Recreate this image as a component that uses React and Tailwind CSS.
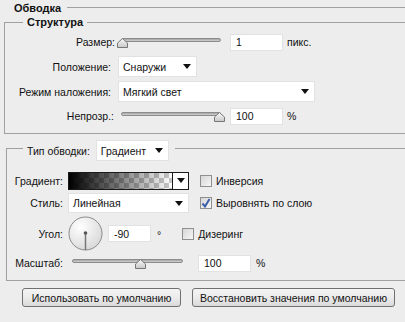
import React from 'react';

const Arrow = () => (
  <svg width="8" height="5" viewBox="0 0 8 5" className="shrink-0">
    <polygon points="0,0 8,0 4,5" fill="#111" />
  </svg>
);

const Select = ({ value, className = '' }) => (
  <div className={`flex items-center justify-between bg-white border border-[#e2e2e2] pl-[4px] pr-[5px] ${className}`}>
    <span>{value}</span>
    <Arrow />
  </div>
);

const Input = ({ value, className = '' }) => (
  <div className={`flex items-center bg-white border border-[#e2e2e2] pl-[5px] h-[17px] ${className}`}>{value}</div>
);

const Slider = ({ width, pct, className = '' }) => (
  <div className={`relative h-[14px] shrink-0 ${className}`}>
    <div className="mx-[4px] mt-[3px] h-[4px] rounded-full border border-[#8c8c8c] bg-linear-to-b from-[#a4a4a4] to-[#d2d2d2]" />
    <svg
      width="11"
      height="10"
      viewBox="0 0 11 10"
      className="absolute top-[3px]"
      style={{ left: Math.round((pct / 100) * (width - 11)) }}
    >
      <defs>
        <linearGradient id="hg" x1="0" y1="0" x2="0" y2="1">
          <stop offset="0" stopColor="#fafafa" />
          <stop offset="1" stopColor="#c8c8c8" />
        </linearGradient>
      </defs>
      <polygon points="5.5,0.5 10.5,5 10.5,9.5 0.5,9.5 0.5,5" fill="url(#hg)" stroke="#777" />
    </svg>
  </div>
);

const Checkbox = ({ checked, label, className = '' }) => (
  <div className={`flex items-center ${className}`}>
    <div className="flex items-center justify-center w-[12px] h-[12px] border border-[#8e8f8f] bg-linear-to-br from-[#d6d6d6] to-[#f7f7f7]">
      {checked && (
        <svg width="10" height="10" viewBox="0 0 10 10">
          <path d="M1.5 5.5 L4 8.5 L8.5 1" fill="none" stroke="#3b5fa8" strokeWidth="2" />
        </svg>
      )}
    </div>
    <span className="ml-[4px]">{label}</span>
  </div>
);

const Dial = () => (
  <svg width="35" height="35" viewBox="0 0 35 35" className="shrink-0">
    <defs>
      <radialGradient id="dg" cx="0.35" cy="0.3" r="0.8">
        <stop offset="0" stopColor="#ffffff" />
        <stop offset="1" stopColor="#d6d6d6" />
      </radialGradient>
    </defs>
    <circle cx="17.5" cy="17.5" r="16.5" fill="url(#dg)" stroke="#8a8a8a" />
    <line x1="17.5" y1="17.5" x2="17.5" y2="34" stroke="#777" strokeWidth="1.5" />
    <circle cx="17.5" cy="17" r="1.8" fill="#555" />
  </svg>
);

const Button = ({ children, className = '' }) => (
  <div className={`flex items-center justify-center h-[19px] rounded-[3px] border border-[#707070] bg-linear-to-b from-[#f4f4f4] via-[#ebebeb] to-[#dadada] ${className}`}>
    {children}
  </div>
);

export default function App() {
  return (
    <div className="w-[405px] h-[322px] overflow-hidden bg-[#ededed] font-['Liberation_Sans',sans-serif] text-[10.5px] leading-[14px] text-[#111]">
      <div className="flex items-center h-[15px] pl-[14px]">
        <span className="font-bold text-[11px]">Обводка</span>
        <div className="flex-1 ml-[6px] border-t border-[#a0a0a0]" />
      </div>

      {/* Структура */}
      <fieldset className="ml-[4px] border-t border-l border-b border-[#a0a0a0] pt-[4px] pb-[8px]">
        <legend className="ml-[18px] px-[4px] font-bold text-[11px]">Структура</legend>
        <div className="flex items-center h-[18px]">
          <div className="w-[110px] text-right">Размер:</div>
          <Slider width={108} pct={0} className="ml-[2px] w-[108px]" />
          <Input value="1" className="ml-[5px] w-[53px]" />
          <span className="ml-[4px]">пикс.</span>
        </div>
        <div className="flex items-center h-[21px] mt-[5px]">
          <div className="w-[106px] text-right">Положение:</div>
          <Select value="Снаружи" className="ml-[7px] w-[79px] h-[21px]" />
        </div>
        <div className="flex items-center h-[21px] mt-[4px]">
          <div className="w-[106px] text-right">Режим наложения:</div>
          <Select value="Мягкий свет" className="ml-[7px] w-[197px] h-[21px]" />
        </div>
        <div className="flex items-center h-[18px] mt-[5px]">
          <div className="w-[109px] text-right">Непрозр.:</div>
          <Slider width={108} pct={100} className="ml-[3px] w-[108px]" />
          <Input value="100" className="ml-[5px] w-[53px]" />
          <span className="ml-[4px]">%</span>
        </div>
      </fieldset>

      {/* Тип обводки */}
      <fieldset className="ml-[6px] mt-[6px] border-t border-l border-b border-[#a0a0a0] pb-[7px]">
        <legend className="ml-[16px] pl-[4px] pr-[6px]">
          <div className="flex items-start h-[16px]">
            <div className="flex items-center h-[21px]">Тип обводки:</div>
            <Select value="Градиент" className="ml-[6px] w-[73px] h-[21px]" />
          </div>
        </legend>

        <div className="flex items-center h-[19px] mt-[15px]">
          <div className="w-[56px] text-right">Градиент:</div>
          <div className="ml-[5px] flex w-[121px] h-[18px] border border-[#1a1a1a] bg-white">
            <div className="flex-1 bg-[conic-gradient(#c8c8c8_25%,#ffffff_0_50%,#c8c8c8_0_75%,#ffffff_0)] bg-[length:10px_10px]">
              <div className="h-full bg-linear-to-r from-black to-transparent" />
            </div>
            <div className="flex items-center justify-center w-[16px] border-l border-[#1a1a1a]">
              <Arrow />
            </div>
          </div>
          <Checkbox label="Инверсия" className="ml-[11px]" />
        </div>

        <div className="flex items-center h-[20px] mt-[3px]">
          <div className="w-[56px] text-right">Стиль:</div>
          <Select value="Линейная" className="ml-[5px] w-[121px] h-[20px]" />
          <Checkbox checked label="Выровнять по слою" className="ml-[11px]" />
        </div>

        <div className="flex items-center h-[35px] mt-[3px]">
          <div className="w-[56px] text-right">Угол:</div>
          <div className="ml-[5px]"><Dial /></div>
          <Input value="-90" className="ml-[5px] w-[43px]" />
          <span className="ml-[6px] mt-[2px]">°</span>
          <Checkbox label="Дизеринг" className="ml-[21px]" />
        </div>

        <div className="flex items-center h-[20px] mt-[2px]">
          <div className="w-[56px] text-right">Масштаб:</div>
          <Slider width={119} pct={62} className="ml-[5px] w-[119px]" />
          <Input value="100" className="ml-[11px] w-[53px]" />
          <span className="ml-[5px]">%</span>
        </div>
      </fieldset>

      <div className="flex mt-[7px] pl-[22px]">
        <Button className="w-[159px]">Использовать по умолчанию</Button>
        <Button className="ml-[11px] w-[203px]">Восстановить значения по умолчанию</Button>
      </div>
    </div>
  );
}
